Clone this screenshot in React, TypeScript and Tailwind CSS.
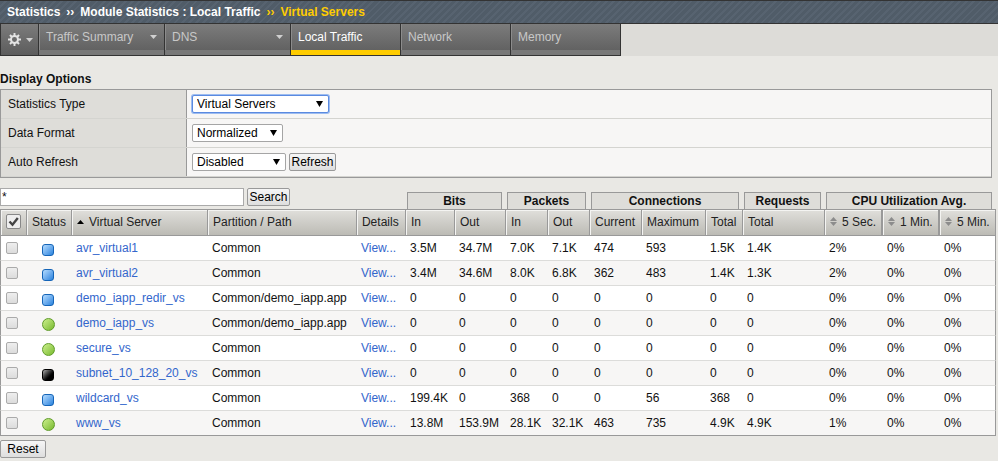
import React from "react";

type Status = "blue" | "green" | "black";

const rows: { name: string; status: Status; path: string; v: string[] }[] = [
  { name: "avr_virtual1", status: "blue", path: "Common", v: ["3.5M", "34.7M", "7.0K", "7.1K", "474", "593", "1.5K", "1.4K", "2%", "0%", "0%"] },
  { name: "avr_virtual2", status: "blue", path: "Common", v: ["3.4M", "34.6M", "8.0K", "6.8K", "362", "483", "1.4K", "1.3K", "2%", "0%", "0%"] },
  { name: "demo_iapp_redir_vs", status: "blue", path: "Common/demo_iapp.app", v: ["0", "0", "0", "0", "0", "0", "0", "0", "0%", "0%", "0%"] },
  { name: "demo_iapp_vs", status: "green", path: "Common/demo_iapp.app", v: ["0", "0", "0", "0", "0", "0", "0", "0", "0%", "0%", "0%"] },
  { name: "secure_vs", status: "green", path: "Common", v: ["0", "0", "0", "0", "0", "0", "0", "0", "0%", "0%", "0%"] },
  { name: "subnet_10_128_20_vs", status: "black", path: "Common", v: ["0", "0", "0", "0", "0", "0", "0", "0", "0%", "0%", "0%"] },
  { name: "wildcard_vs", status: "blue", path: "Common", v: ["199.4K", "0", "368", "0", "0", "56", "368", "0", "0%", "0%", "0%"] },
  { name: "www_vs", status: "green", path: "Common", v: ["13.8M", "153.9M", "28.1K", "32.1K", "463", "735", "4.9K", "4.9K", "1%", "0%", "0%"] },
];

const groups: { label: string; span: number }[] = [
  { label: "Bits", span: 2 },
  { label: "Packets", span: 2 },
  { label: "Connections", span: 3 },
  { label: "Requests", span: 1 },
  { label: "CPU Utilization Avg.", span: 3 },
];

const statusClass: Record<Status, string> = {
  blue: "size-3 rounded-[3px] border-[#1565b8] bg-linear-to-br from-[#b4dcff] to-[#2482dc]",
  green: "size-[13px] rounded-full border-[#5f9c28] bg-linear-to-br from-[#cdf08c] to-[#78b928]",
  black: "size-3 rounded-[3px] border-black bg-linear-to-br from-[#b4b4b4] to-black to-75%",
};

const th = "h-[27px] border-y border-r border-[#999] bg-linear-to-b from-[#e0dfdb] to-[#bcbbb5] pl-[5px] pr-0 pb-[2px] text-left font-normal text-[#222] shadow-[inset_1px_1px_0_#f4f4f2]";
const td = "h-[25px] border-b border-[#dcdcda] pl-1";
const button = "h-[18px] rounded-[2px] border border-[#999] bg-linear-to-b from-[#f6f6f6] to-[#dedede] text-black";
const box = "ml-px block size-3 appearance-none rounded-[2px] border border-[#aaa] bg-linear-to-b from-[#eee] to-[#dcdcdc]";

function Caret() {
  return (
    <svg className="h-1 w-[7px] shrink-0" viewBox="0 0 7 4" aria-hidden="true">
      <path d="M0 0h7L3.5 4z" fill="#d0d0d0" />
    </svg>
  );
}

function Gear() {
  return (
    <svg className="size-[13px] shrink-0" viewBox="0 0 12 12" aria-hidden="true">
      <g stroke="#e4e4e4" strokeWidth="1.8">
        <path d="M6 0v12M0 6h12M1.8 1.8l8.4 8.4M10.2 1.8l-8.4 8.4" />
      </g>
      <circle cx="6" cy="6" r="4.1" fill="#e4e4e4" />
      <circle cx="6" cy="6" r="2.3" fill="#6c6c6c" />
    </svg>
  );
}

function Sorter() {
  return (
    <svg className="h-[9px] w-[7px] shrink-0" viewBox="0 0 7 9" aria-hidden="true">
      <path d="M0 4h7L3.5 0zM0 5h7L3.5 9z" fill="#8c8c8c" />
    </svg>
  );
}

function Tab({ label, width, menu, active }: { label: string; width: string; menu?: boolean; active?: boolean }) {
  return (
    <button
      className={`${width} ${active ? "border-b-[#fc0] text-white" : "border-b-[#787878] text-[#c8c8c8]"} flex h-[31px] items-start justify-between border-b-5 bg-linear-to-b from-[#7c7c7c] to-[#626262] pt-[5px] pr-[7px] pl-[7px] leading-4 shadow-[inset_1px_0_0_#8c8c8c]`}
    >
      {label}
      {menu && (
        <span className="flex h-4 items-center">
          <Caret />
        </span>
      )}
    </button>
  );
}

function Picker({ id, value, width, focus }: { id: string; value: string; width: string; focus?: boolean }) {
  return (
    <span className={`${width} grid h-[18px] items-center`}>
      <select
        id={id}
        className={`${focus ? "border-[#5a8ae0] shadow-[0_0_0_1px_#9dbcf0]" : "border-[#a5a5a5]"} col-start-1 row-start-1 h-full w-full appearance-none rounded-[2px] border bg-white pl-1 text-black outline-none`}
      >
        <option>{value}</option>
      </select>
      <svg className="pointer-events-none z-10 col-start-1 row-start-1 mr-1.5 h-1.5 w-[7px] justify-self-end" viewBox="0 0 7 6" aria-hidden="true">
        <path d="M0 0h7L3.5 6z" fill="#000" />
      </svg>
    </span>
  );
}

function Option({ id, label, children }: { id: string; label: string; children: React.ReactNode }) {
  return (
    <div className="flex h-[29px] border-b border-[#d4d4d0]">
      <label htmlFor={id} className="flex w-[186px] shrink-0 items-center border-r border-[#999] bg-[#deddd9] pl-[7px]">
        {label}
      </label>
      <div className="flex grow items-center gap-[3px] bg-[#f7f6f5] pl-[5px]">{children}</div>
    </div>
  );
}

export default function App() {
  return (
    <div className="min-h-screen bg-[#e9e8e4] font-['Liberation_Sans',Arial,sans-serif] text-xs text-[#111]">
      <nav aria-label="Breadcrumb" className="flex h-6 items-center gap-1.5 border-y border-[#333] bg-[repeating-linear-gradient(135deg,#505c68_0_3px,#576370_3px_5px)] pl-[7px] font-bold text-white">
        <span>Statistics</span>
        <span>››</span>
        <span>Module Statistics : Local Traffic</span>
        <span className="text-[#fc0]">››</span>
        <span className="text-[#fc0]">Virtual Servers</span>
      </nav>
      <div className="flex h-8 bg-[#dddcd8]">
        <div className="flex gap-px border-x border-b border-[#333] bg-[#333]">
          <button aria-label="Settings" className="flex w-[37px] items-center justify-end gap-[5px] bg-linear-to-b from-[#7c7c7c] to-[#5c5c5c] pr-[5px]">
            <Gear />
            <Caret />
          </button>
          <Tab label="Traffic Summary" width="w-[125px]" menu />
          <Tab label="DNS" width="w-[125px]" menu />
          <Tab label="Local Traffic" width="w-[109px]" active />
          <Tab label="Network" width="w-[109px]" />
          <Tab label="Memory" width="w-[109px]" />
        </div>
      </div>

      <h2 className="mt-[15px] h-[18px] leading-4 font-bold">Display Options</h2>
      <section className="mr-1.5 border border-[#999]">
        <Option id="type" label="Statistics Type">
          <Picker id="type" value="Virtual Servers" width="w-[137px]" focus />
        </Option>
        <Option id="format" label="Data Format">
          <Picker id="format" value="Normalized" width="w-[91px]" />
        </Option>
        <Option id="refresh" label="Auto Refresh">
          <Picker id="refresh" value="Disabled" width="w-[94px]" />
          <button className={`${button} w-[47px]`}>Refresh</button>
        </Option>
      </section>

      <div className="mt-[10px] -mb-[14px] flex w-[400px] items-start gap-[3px]">
        <input aria-label="Search" defaultValue="*" className="h-[18px] w-[244px] border border-[#aaa] bg-white pl-px outline-none" />
        <button className={`${button} w-[43px]`}>Search</button>
      </div>
      <table className="w-full table-fixed border-separate border-spacing-0 border-r-2 border-transparent leading-[14px]">
        <colgroup>
          <col className="w-[27px]" />
          <col className="w-[45px]" />
          <col className="w-[136px]" />
          <col />
          <col className="w-[49px]" />
          <col className="w-[49px]" />
          <col className="w-[51px]" />
          <col className="w-[42px]" />
          <col className="w-[42px]" />
          <col className="w-[52px]" />
          <col className="w-[64px]" />
          <col className="w-[37px]" />
          <col className="w-[82px]" />
          <col className="w-[58px]" />
          <col className="w-[57px]" />
          <col className="w-[56px]" />
        </colgroup>
        <thead>
          <tr>
            <td colSpan={5} />
            {groups.map((g) => (
              <th key={g.label} colSpan={g.span} scope="colgroup" className="pr-1 pl-px">
                <div className="h-[17px] border border-b-0 border-[#999] bg-[#deddd9] leading-4">{g.label}</div>
              </th>
            ))}
          </tr>
          <tr>
            <th className={`${th} border-l`}>
              <span className="grid size-[15px] place-items-center">
                <input type="checkbox" aria-label="Select all" defaultChecked className="col-start-1 row-start-1 size-[15px] appearance-none rounded-[2px] border border-[#888] bg-[#eee]" />
                <svg className="pointer-events-none col-start-1 row-start-1 size-[11px]" viewBox="0 0 11 11" aria-hidden="true">
                  <path d="M1.5 5.5l3 3.2L9.8 2" fill="none" stroke="#444" strokeWidth="2.4" />
                </svg>
              </span>
            </th>
            <th className={th}>Status</th>
            <th className={th}>
              <span className="flex items-center gap-[5px]">
                <svg className="h-1 w-[7px]" viewBox="0 0 7 4" aria-hidden="true">
                  <path d="M0 4h7L3.5 0z" fill="#000" />
                </svg>
                Virtual Server
              </span>
            </th>
            <th className={th}>Partition / Path</th>
            <th className={th}>Details</th>
            {["In", "Out", "In", "Out", "Current", "Maximum", "Total", "Total"].map((h, i) => (
              <th key={i} className={th}>{h}</th>
            ))}
            {["5 Sec.", "1 Min.", "5 Min."].map((h) => (
              <th key={h} className={`${th} not-last:border-r-2`}>
                <span className="flex items-center gap-[5px]">
                  <Sorter />
                  {h}
                </span>
              </th>
            ))}
          </tr>
        </thead>
        <tbody className="[&>tr:last-child>td]:border-b-[#999]">
          {rows.map((r) => (
            <tr key={r.name} className="bg-white even:bg-[#f7f6f5]">
              <td className={`${td} border-l border-l-[#999]`}>
                <input type="checkbox" aria-label={`Select ${r.name}`} className={box} />
              </td>
              <td className={td}>
                <div role="img" aria-label={r.status} className={`${statusClass[r.status]} mt-[3px] ml-[11px] border`} />
              </td>
              <td className={td}>
                <a href="#" className="text-[#36c]">{r.name}</a>
              </td>
              <td className={td}>{r.path}</td>
              <td className={td}>
                <a href="#" className="text-[#36c]">View...</a>
              </td>
              {r.v.map((x, i) => (
                <td key={i} className={`${td} last:border-r last:border-r-[#999]`}>{x}</td>
              ))}
            </tr>
          ))}
        </tbody>
      </table>
      <button className={`${button} mt-1 w-[46px]`}>Reset</button>
    </div>
  );
}
